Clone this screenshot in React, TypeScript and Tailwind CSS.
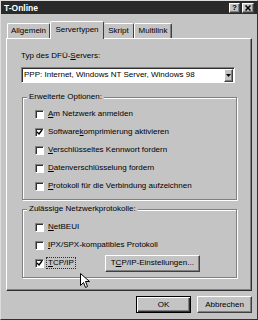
import React from "react";

const raised =
  "border border-t-white border-l-white border-r-[#404040] border-b-[#404040] shadow-[inset_-1px_-1px_0_#808080]";

function U({ children }: { children: React.ReactNode }) {
  return <span className="underline underline-offset-[1px]">{children}</span>;
}

function Check({ checked }: { checked?: boolean }) {
  return (
    <div className="w-[9px] h-[9px] shrink-0 bg-white border border-t-[#808080] border-l-[#808080] border-r-white border-b-white shadow-[inset_1px_1px_0_#303030] flex items-center justify-center">
      {checked && (
        <svg width="7" height="7" viewBox="0 0 7 7" className="block">
          <path d="M1 3 L3 5 L6 1" stroke="#000" strokeWidth="1.4" fill="none" />
        </svg>
      )}
    </div>
  );
}

function Row({ checked, children }: { checked?: boolean; children: React.ReactNode }) {
  return (
    <div className="h-[18px] flex items-center gap-[4px]">
      <Check checked={checked} />
      <span className="leading-[10px]">{children}</span>
    </div>
  );
}

function Group({ label, children, className }: { label: string; children: React.ReactNode; className: string }) {
  return (
    <div
      className={
        "relative ml-[15px] w-[215px] border border-[#808080] shadow-[inset_1px_1px_0_#fff,1px_1px_0_#fff] pl-[12px] " +
        className
      }
    >
      <span className="absolute -top-[6px] left-[4px] px-[2px] bg-[#c4c4c4] leading-[10px]">{label}</span>
      {children}
    </div>
  );
}

export default function App() {
  return (
    <div className="relative w-[258px] h-[320px] bg-[#c4c4c4] border border-t-[#dcdcdc] border-l-[#dcdcdc] border-r-[#303030] border-b-[#303030] font-['Liberation_Sans',Arial,sans-serif] text-[8px] text-black flex flex-col overflow-hidden">
      {/* Title bar */}
      <div className="h-[13px] bg-[#2a2a2a] flex items-center justify-between pl-[3px] pr-[3px]">
        <span className="text-white font-bold text-[8.5px] leading-[10px]">T-Online</span>
        <div className="flex gap-[2px]">
          <div className={"w-[11px] h-[10px] bg-[#c4c4c4] flex items-center justify-center font-bold text-[8px] leading-[8px] " + raised}>
            ?
          </div>
          <div className={"w-[12px] h-[10px] bg-[#c4c4c4] flex items-center justify-center " + raised}>
            <svg width="6" height="6" viewBox="0 0 6 6" className="block">
              <path d="M0.5 0.5 L5.5 5.5 M5.5 0.5 L0.5 5.5" stroke="#000" strokeWidth="1.5" />
            </svg>
          </div>
        </div>
      </div>

      {/* Tabs */}
      <div className="mt-[7px] ml-[6px] h-[17px] flex items-end">
        <div className="w-[43px] h-[15px] border-t border-l border-t-white border-l-white border-r border-r-[#404040] rounded-t-[2px] flex items-center justify-center leading-[10px]">
          Allgemein
        </div>
        <div className="relative z-10 -mb-px w-[54px] h-[18px] bg-[#c4c4c4] border-t border-l border-t-white border-l-white border-r border-r-[#404040] rounded-t-[2px] flex items-start pt-[3px] justify-center leading-[10px]">
          Servertypen
        </div>
        <div className="w-[30px] h-[15px] border-t border-t-white border-r border-r-[#404040] rounded-t-[2px] flex items-center justify-center leading-[10px]">
          Skript
        </div>
        <div className="w-[38px] h-[15px] border-t border-l border-t-white border-l-white border-r border-r-[#404040] shadow-[inset_-1px_0_0_#808080] rounded-t-[2px] flex items-center justify-center leading-[10px]">
          Multilink
        </div>
      </div>

      {/* Panel */}
      <div className="ml-[5px] w-[246px] h-[253px] border border-t-white border-l-white border-r-[#303030] border-b-[#303030] shadow-[inset_-1px_-1px_0_#808080] flex flex-col">
        <div className="mt-[12px] ml-[14px] leading-[10px]">
          Typ des DFÜ-<U>S</U>ervers:
        </div>
        <div className="mt-[6px] ml-[14px] w-[214px] h-[16px] bg-white border border-t-[#808080] border-l-[#808080] border-r-white border-b-white shadow-[inset_1px_1px_0_#303030] flex items-center pl-[2px] pr-[1px]">
          <span className="flex-1 leading-[10px]">PPP: Internet, Windows NT Server, Windows 98</span>
          <div className={"w-[9px] h-[13px] bg-[#c4c4c4] flex items-center justify-center " + raised}>
            <svg width="5" height="3" viewBox="0 0 5 3" className="block">
              <path d="M0 0 L5 0 L2.5 3 Z" fill="#000" />
            </svg>
          </div>
        </div>

        <Group label="Erweiterte Optionen:" className="mt-[14px] h-[103px] pt-[7px]">
          <Row>
            <U>A</U>m Netzwerk anmelden
          </Row>
          <Row checked>
            Software<U>k</U>omprimierung aktivieren
          </Row>
          <Row>
            <U>V</U>erschlüsseltes Kennwort fordern
          </Row>
          <Row>
            <U>D</U>atenverschlüsselung fordern
          </Row>
          <Row>
            <U>P</U>rotokoll für die Verbindung aufzeichnen
          </Row>
        </Group>

        <Group label="Zulässige Netzwerkprotokolle:" className="mt-[9px] h-[69px] pt-[8px]">
          <Row>
            <U>N</U>etBEUI
          </Row>
          <Row>
            <U>I</U>PX/SPX-kompatibles Protokoll
          </Row>
          <div className="h-[18px] flex items-center">
            <Check checked />
            <span className="ml-[2px] px-[1px] h-[12px] border border-dotted border-[#303030] flex items-center leading-[10px]">
              <U>T</U>CP/IP
            </span>
            <div className={"ml-[29px] w-[95px] h-[17px] bg-[#c4c4c4] flex items-center justify-center leading-[10px] " + raised}>
              T<U>C</U>P/IP-Einstellungen...
            </div>
          </div>
        </Group>
      </div>

      {/* Buttons */}
      <div className="mt-[5px] flex justify-end gap-[6px] pr-[5px]">
        <div className="w-[55px] h-[17px] border border-black bg-[#c4c4c4] shadow-[inset_1px_1px_0_#fff,inset_-1px_-1px_0_#303030,inset_-2px_-2px_0_#808080] flex items-center justify-center leading-[10px]">
          OK
        </div>
        <div className={"w-[55px] h-[17px] bg-[#c4c4c4] flex items-center justify-center leading-[10px] " + raised}>
          Abbrechen
        </div>
      </div>

      {/* Mouse cursor */}
      <svg
        className="absolute left-[79px] top-[272px]"
        width="10"
        height="16"
        viewBox="0 0 10 16"
      >
        <path
          d="M0.5 0.5 L0.5 12.5 L3.5 9.5 L5.5 14.5 L7.5 13.5 L5.5 8.5 L9.5 8.5 Z"
          fill="#fff"
          stroke="#000"
          strokeWidth="1"
        />
      </svg>
    </div>
  );
}
